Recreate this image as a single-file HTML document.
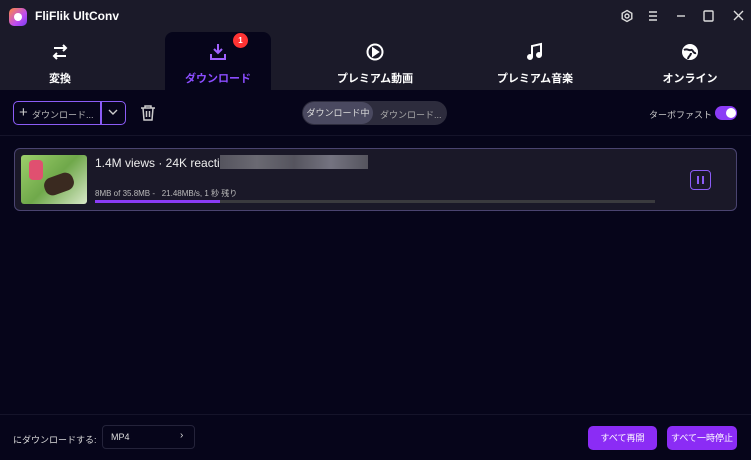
<!DOCTYPE html><html><head><meta charset="utf-8"><style>
*{margin:0;padding:0;box-sizing:border-box}
body{width:751px;height:460px;background:#06051a;font-family:"Liberation Sans","Noto Sans CJK JP",sans-serif;color:#fff;position:relative;overflow:hidden}
.top{position:absolute;left:0;top:0;width:751px;height:90px;background:#1b1a29}
.abs{position:absolute}
.tab{position:absolute;top:32px;height:58px;text-align:center;font-size:11px;font-weight:bold}
.tab span{position:absolute;top:38px;left:0;right:0}
.tab svg{position:absolute;top:10px;left:50%;margin-left:-10px}
</style></head><body>
<div class="top"></div>
<div class="abs" style="left:9px;top:8px;width:18px;height:18px;border-radius:5px;background:linear-gradient(135deg,#ff8a3c,#c04df0 60%,#7a3cf0)"></div>
<div class="abs" style="left:14px;top:13px;width:8px;height:8px;border-radius:50%;background:#fff"></div>
<div class="abs" style="left:35px;top:9px;font-size:12px;font-weight:bold">FliFlik UltConv</div>
<svg class="abs" style="left:620px;top:9px" width="130" height="16" fill="none" stroke="#ddd" stroke-width="1.4">
<circle cx="7" cy="7" r="2"/><path d="M7 1.5l4.8 2.75v5.5L7 12.5 2.2 9.75v-5.5z"/>
<path d="M29 3h8M29 7h8M29 11h8"/><path d="M57 7h8"/>
<rect x="84" y="2" width="9" height="10" rx="1"/><path d="M114 2l9 9M123 2l-9 9"/></svg>
<div class="tab" style="left:0;width:120px"><svg width="20" height="20" fill="none" stroke="#fff" stroke-width="2"><path d="M4 6h12M13 3l3 3-3 3M16 14H4M7 11l-3 3 3 3"/></svg><span>変換</span></div>
<div class="tab" style="left:165px;width:106px;background:#06051a;border-radius:8px 8px 0 0;color:#8b4dff"><svg width="20" height="20" fill="none" stroke="#a061ff" stroke-width="2"><path d="M10 2v9M6 7l4 4 4-4M3 12v5h14v-5"/></svg><span>ダウンロード</span></div>
<div class="abs" style="left:233px;top:33px;width:15px;height:15px;border-radius:50%;background:#f33;font-size:8px;font-weight:bold;text-align:center;line-height:15px">1</div>
<div class="tab" style="left:315px;width:120px"><svg width="20" height="20" fill="none" stroke="#fff" stroke-width="2"><circle cx="10" cy="10" r="7.5"/><path d="M8 6.5v7l5-3.5z" fill="#fff"/></svg><span>プレミアム動画</span></div>
<div class="tab" style="left:475px;width:120px"><svg width="20" height="20" fill="none" stroke="#fff" stroke-width="2"><path d="M7 15V4l9-2v11"/><circle cx="5" cy="15" r="2" fill="#fff"/><circle cx="14" cy="13" r="2" fill="#fff"/></svg><span>プレミアム音楽</span></div>
<div class="tab" style="left:630px;width:120px"><svg width="20" height="20"><circle cx="10" cy="10" r="8" fill="#fff"/><path d="M4 8c3-2 5 1 7 0s2 4 5 3M8 17c0-3 3-3 3-6" stroke="#1b1a29" stroke-width="2" fill="none"/></svg><span>オンライン</span></div>
<div class="abs" style="left:13px;top:101px;width:113px;height:24px;border:1.5px solid #8b5cf6;border-radius:5px"></div>
<div class="abs" style="left:100px;top:101px;width:1.5px;height:24px;background:#8b5cf6"></div>
<div class="abs" style="left:19px;top:104px;font-size:15px;color:#ccc">+</div>
<div class="abs" style="left:32px;top:108px;font-size:9px;color:#bbb">ダウンロード...</div>
<svg class="abs" style="left:108px;top:108px" width="10" height="8" fill="none" stroke="#ccc" stroke-width="1.4"><path d="M1 2l4 4 4-4"/></svg>
<svg class="abs" style="left:140px;top:104px" width="16" height="18" fill="none" stroke="#ccc" stroke-width="1.5"><path d="M1 4h14M5 4V2h6v2M3 4l1 12h8l1-12M6.5 7v6M9.5 7v6"/></svg>
<div class="abs" style="left:302px;top:101px;width:145px;height:24px;border-radius:12px;background:#2d2c3d"></div>
<div class="abs" style="left:303px;top:102px;width:70px;height:22px;border-radius:11px;background:#4a4960;font-size:9px;color:#ddd;text-align:center;line-height:22px">ダウンロード中</div>
<div class="abs" style="left:380px;top:108px;font-size:9px;color:#aaa">ダウンロード...</div>
<div class="abs" style="left:649px;top:108px;font-size:9px;color:#ccc">ターボファスト</div>
<div class="abs" style="left:715px;top:106px;width:22px;height:14px;border-radius:7px;background:#8b3cf6"></div>
<div class="abs" style="left:726px;top:108px;width:10px;height:10px;border-radius:50%;background:#fff"></div>
<div class="abs" style="left:0;top:135px;width:751px;height:1px;background:#15142a"></div>
<div class="abs" style="left:14px;top:148px;width:723px;height:63px;border:1px solid #4a4470;border-radius:6px;background:#1a1828"></div>
<div class="abs" style="left:21px;top:155px;width:66px;height:49px;border-radius:3px;background:linear-gradient(135deg,#9ccf6a,#6fa84a 50%,#d8e8c8)"></div>
<div class="abs" style="left:29px;top:160px;width:14px;height:20px;background:#e05070;border-radius:4px"></div>
<div class="abs" style="left:44px;top:175px;width:30px;height:18px;background:#3a2a20;border-radius:8px;transform:rotate(-20deg)"></div>
<div class="abs" style="left:95px;top:156px;font-size:12px;color:#eee">1.4M views · 24K reactior</div>
<div class="abs" style="left:220px;top:155px;width:148px;height:14px;background:linear-gradient(90deg,#55545e,#6a6972,#55545e,#747380,#55545e)"></div>
<div class="abs" style="left:95px;top:188px;font-size:8px;color:#bbb">8MB of 35.8MB -&nbsp;&nbsp; 21.48MB/s, 1 秒 残り</div>
<div class="abs" style="left:95px;top:200px;width:560px;height:3px;background:#3a3a3e"></div>
<div class="abs" style="left:95px;top:200px;width:125px;height:3px;background:#8b3cf6"></div>
<div class="abs" style="left:690px;top:170px;width:21px;height:20px;border:1.5px solid #8b5cf6;border-radius:4px"></div>
<div class="abs" style="left:697px;top:176px;width:2px;height:8px;background:#8b5cf6"></div>
<div class="abs" style="left:702px;top:176px;width:2px;height:8px;background:#8b5cf6"></div>
<div class="abs" style="left:0;top:414px;width:751px;height:1px;background:#15142a"></div>
<div class="abs" style="left:13px;top:433px;font-size:9px;color:#ddd">にダウンロードする:</div>
<div class="abs" style="left:102px;top:425px;width:93px;height:24px;border:1px solid #24233a;border-radius:4px"></div>
<div class="abs" style="left:111px;top:432px;font-size:9px;color:#ddd">MP4</div>
<div class="abs" style="left:180px;top:430px;font-size:10px;color:#ddd">›</div>
<div class="abs" style="left:588px;top:426px;width:69px;height:24px;border-radius:5px;background:#8b2cf5;font-size:9px;text-align:center;line-height:24px">すべて再開</div>
<div class="abs" style="left:667px;top:426px;width:70px;height:24px;border-radius:5px;background:#8b2cf5;font-size:9px;text-align:center;line-height:24px">すべて一時停止</div>
</body></html>
